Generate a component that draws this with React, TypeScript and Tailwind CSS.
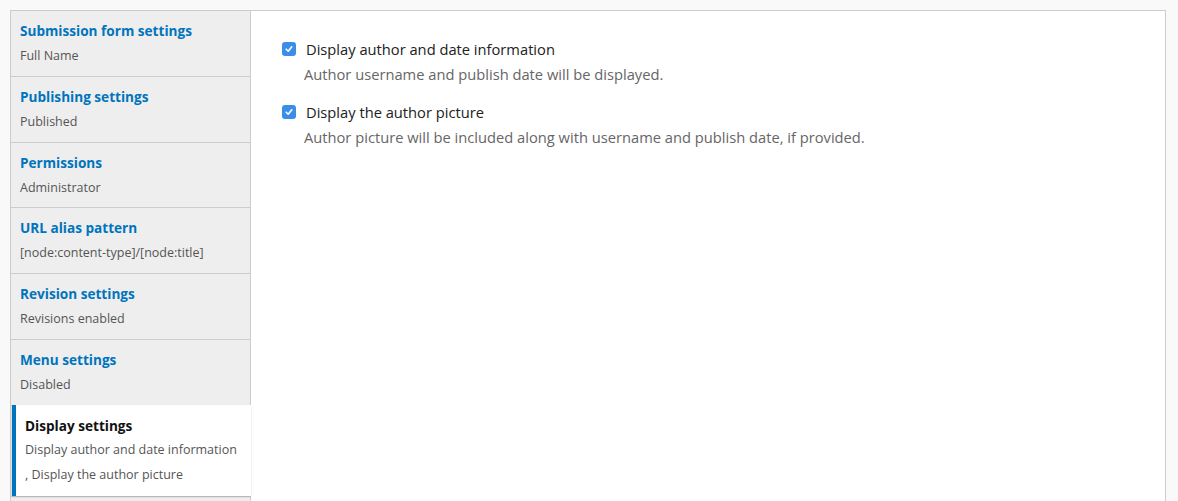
import React from "react";

const items = [
  { title: "Submission form settings", summary: "Full Name" },
  { title: "Publishing settings", summary: "Published" },
  { title: "Permissions", summary: "Administrator" },
  { title: "URL alias pattern", summary: "[node:content-type]/[node:title]" },
  { title: "Revision settings", summary: "Revisions enabled" },
  { title: "Menu settings", summary: "Disabled" },
];

function Check() {
  return (
    <span className="mt-[5px] flex h-[14px] w-[14px] shrink-0 items-center justify-center rounded-[3px] bg-[#3b8ee8]">
      <svg width="10" height="10" viewBox="0 0 10 10" fill="none">
        <path d="M2.2 5.2 L4.2 7.2 L7.8 2.8" stroke="white" strokeWidth="1.6" strokeLinecap="round" strokeLinejoin="round" />
      </svg>
    </span>
  );
}

export default function App() {
  return (
    <div
      className="h-[501px] overflow-hidden bg-[#f9f9f9] pl-[10px] pr-[12px] pt-[10px]"
      style={{ fontFamily: '"Open Sans", "Noto Sans", sans-serif' }}
    >
      <div className="flex min-h-[520px] border border-[#cccccc] bg-white">
        <div className="w-[240px] shrink-0 border-r border-[#cccccc] bg-[#eeeeee]">
          {items.map((it) => (
            <div key={it.title} className="border-b border-[#cccccc] pb-[7.8px] pl-[9px] pr-2 pt-[8px] leading-[24px]">
              <div className="text-[13.6px] font-bold text-[#0074bd]">{it.title}</div>
              <div className="pt-[1px] text-[12.5px] text-[#555555]">{it.summary}</div>
            </div>
          ))}
          <div className="relative -mr-px ml-px -mt-px border-l-4 border-[#0074bd] bg-white pb-[9px] pl-[9px] pr-2 pt-[9px] leading-[24.5px] shadow-[0_1px_2px_rgba(0,0,0,0.15)]">
            <div className="text-[13.6px] font-bold text-[#111111]">Display settings</div>
            <div className="text-[12.5px] text-[#555555]">
              Display author and date information
              <br />, Display the author picture
            </div>
          </div>
          <div className="border-t border-[#cccccc]" />
        </div>
        <div className="flex-1 pl-[31px] pt-[26px]">
          <div className="flex flex-col gap-[13px]">
            <div className="flex gap-[10px]">
              <Check />
              <div className="leading-[25px]">
                <div className="text-[14.7px] text-[#222222]">Display author and date information</div>
                <div className="-ml-[2px] text-[14.7px] text-[#666666]">Author username and publish date will be displayed.</div>
              </div>
            </div>
            <div className="flex gap-[10px]">
              <Check />
              <div className="leading-[25px]">
                <div className="text-[14.7px] text-[#222222]">Display the author picture</div>
                <div className="-ml-[2px] text-[14.7px] text-[#666666]">
                  Author picture will be included along with username and publish date, if provided.
                </div>
              </div>
            </div>
          </div>
        </div>
      </div>
    </div>
  );
}
